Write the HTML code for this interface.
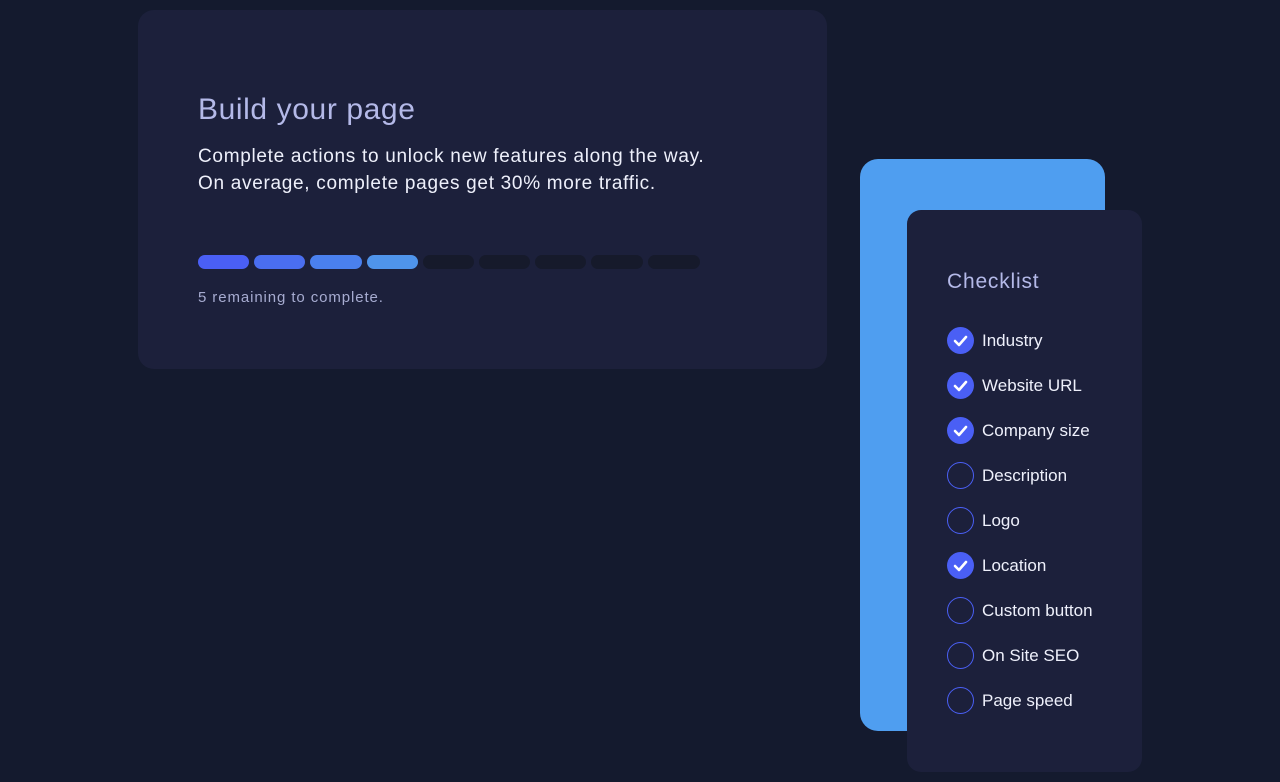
<!DOCTYPE html>
<html><head><style>
body{margin:0;width:1280px;height:782px;background:#141a2e;font-family:"Liberation Sans",sans-serif;position:relative;overflow:hidden}
.card{position:absolute;left:138px;top:10px;width:689px;height:359px;background:#1c203b;border-radius:16px}
h1{position:absolute;left:198px;top:93px;margin:0;font-weight:400;font-size:30px;color:#b4b9e8;letter-spacing:0.6px}
.p{position:absolute;left:198px;top:143px;font-size:19px;line-height:27px;color:#eef0fb;letter-spacing:0.7px}
.bar{position:absolute;top:255px;height:14px;border-radius:7px;width:51px}
.rem{position:absolute;left:198px;top:289px;font-size:15px;color:#a6abd0;letter-spacing:0.9px}
.blue{position:absolute;left:860px;top:159px;width:245px;height:572px;background:#4f9ef0;border-radius:18px}
.cl{position:absolute;left:907px;top:210px;width:235px;height:562px;background:#1c203b;border-radius:14px}
.ct{position:absolute;left:947px;top:270px;font-size:21px;color:#b4b9e8;letter-spacing:0.8px}
.it{position:absolute;left:947px;height:27px;display:flex;align-items:center;font-size:17px;color:#eef0fb}
.c{width:27px;height:27px;border-radius:50%;box-sizing:border-box;margin-right:8px;display:flex;align-items:center;justify-content:center}
.on{background:#4a5ff5}.off{border:1px solid #4a5ff5}
</style></head><body>
<div class="card"></div>
<h1>Build your page</h1>
<div class="p">Complete actions to unlock new features along the way.<br>On average, complete pages get 30% more traffic.</div>
<div class="bar" style="left:198px;background:#4a5ff5"></div>
<div class="bar" style="left:254px;background:#4a6ef0"></div>
<div class="bar" style="left:310px;width:52px;background:#4a80ee"></div>
<div class="bar" style="left:367px;background:#4f94eb"></div>
<div class="bar" style="left:423px;background:#161a2b"></div>
<div class="bar" style="left:479px;background:#161a2b"></div>
<div class="bar" style="left:535px;background:#161a2b"></div>
<div class="bar" style="left:591px;width:52px;background:#161a2b"></div>
<div class="bar" style="left:648px;width:52px;background:#161a2b"></div>
<div class="rem">5 remaining to complete.</div>
<div class="blue"></div>
<div class="cl"></div>
<div class="ct">Checklist</div>
<div class="it" style="top:327px"><div class="c on"><svg width="15" height="12" viewBox="0 0 15 12"><path d="M2 6l4 4 7-8" stroke="#fff" stroke-width="2.6" fill="none" stroke-linecap="round" stroke-linejoin="round"/></svg></div>Industry</div>
<div class="it" style="top:372px"><div class="c on"><svg width="15" height="12" viewBox="0 0 15 12"><path d="M2 6l4 4 7-8" stroke="#fff" stroke-width="2.6" fill="none" stroke-linecap="round" stroke-linejoin="round"/></svg></div>Website URL</div>
<div class="it" style="top:417px"><div class="c on"><svg width="15" height="12" viewBox="0 0 15 12"><path d="M2 6l4 4 7-8" stroke="#fff" stroke-width="2.6" fill="none" stroke-linecap="round" stroke-linejoin="round"/></svg></div>Company size</div>
<div class="it" style="top:462px"><div class="c off"></div>Description</div>
<div class="it" style="top:507px"><div class="c off"></div>Logo</div>
<div class="it" style="top:552px"><div class="c on"><svg width="15" height="12" viewBox="0 0 15 12"><path d="M2 6l4 4 7-8" stroke="#fff" stroke-width="2.6" fill="none" stroke-linecap="round" stroke-linejoin="round"/></svg></div>Location</div>
<div class="it" style="top:597px"><div class="c off"></div>Custom button</div>
<div class="it" style="top:642px"><div class="c off"></div>On Site SEO</div>
<div class="it" style="top:687px"><div class="c off"></div>Page speed</div>
</body></html>
